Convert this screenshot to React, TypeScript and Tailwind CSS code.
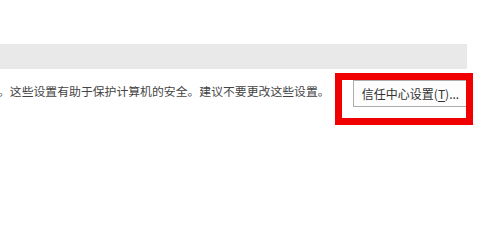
import React from 'react';

const App = () => {
  return (
    <div className="relative w-[477px] h-[201px] bg-white overflow-hidden" style={{ fontFamily: '"Microsoft YaHei", "Noto Sans CJK SC", sans-serif' }}>
      {/* top spacing */}
      <div className="h-[44px]" />

      {/* grey header strip */}
      <div className="w-[467px] h-[25px] bg-[#e9e9e9]" />

      {/* text + button row */}
      <div className="flex items-start mt-[11px]">
        <p className="shrink-0 w-[355px] ml-[-2px] mt-[4px] text-[11.85px] leading-[14px] text-[#444444] whitespace-nowrap">
          。这些设置有助于保护计算机的安全。建议不要更改这些设置。
        </p>
        <button className="shrink-0 w-[115px] h-[27px] border border-[#adadad] bg-[#fdfdfd] text-[12px] leading-[14px] text-[#333333] pt-[1px]">
          信任中心设置(<span className="underline underline-offset-2">T</span>)...
        </button>
      </div>

      {/* red highlight annotation */}
      <div className="absolute left-[335px] top-[73px] w-[138px] h-[52px] border-[7px] border-[#f00000]" />
    </div>
  );
};

export default App;
